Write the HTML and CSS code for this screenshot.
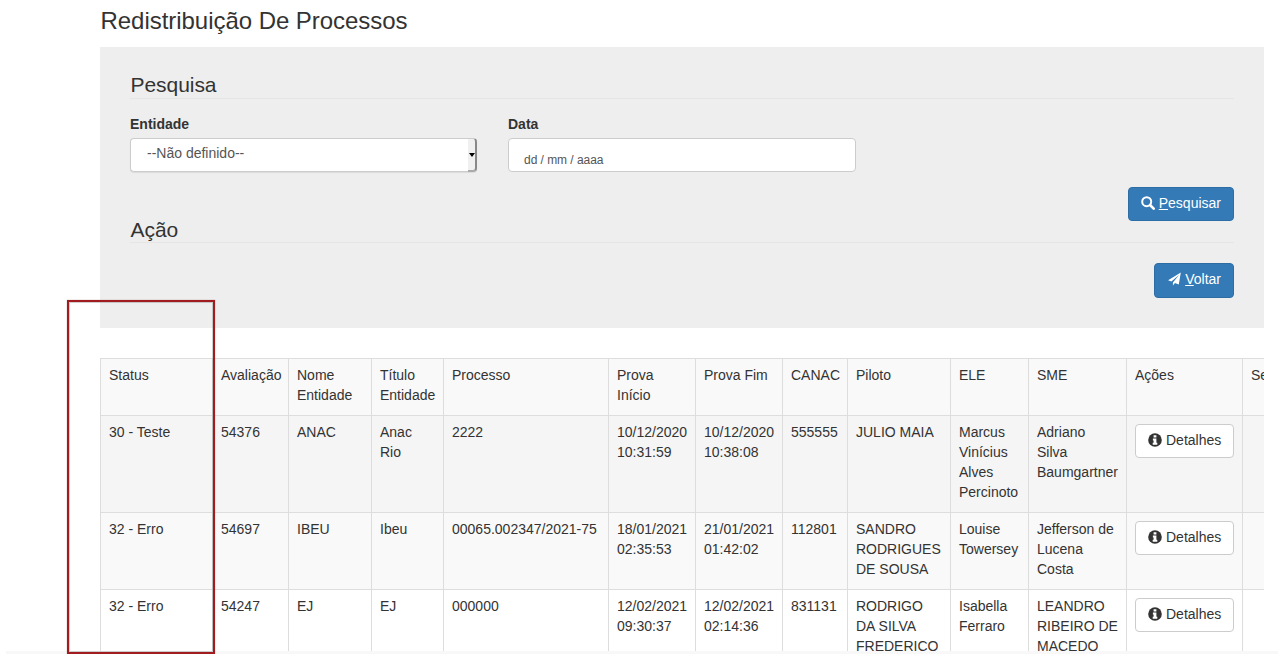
FILE: index.html
```html
<!DOCTYPE html>
<html lang="pt-BR">
<head>
<meta charset="utf-8">
<title>Redistribuição De Processos</title>
<link rel="stylesheet" href="styles.css">
</head>
<body>
<main class="page">
  <h1 class="title">Redistribuição De Processos</h1>
  <section class="panel">
    <h2 class="legend">Pesquisa</h2>
    <div class="fields">
      <div class="field field-entity">
        <label class="label">Entidade</label>
        <div class="select"><span class="select-text">--Não definido--</span><span class="select-arrow"><i></i></span></div>
      </div>
      <div class="field field-date">
        <label class="label">Data</label>
        <div class="date"><span>dd / mm / aaaa</span></div>
      </div>
    </div>
    <div class="actions actions-search">
      <a class="btn btn-primary">
        <svg class="icon" viewBox="0 0 14 14" width="14" height="14"><circle cx="5.7" cy="5.7" r="4.5" fill="none" stroke="#fff" stroke-width="2"/><path d="M9 9 12.7 12.7" stroke="#fff" stroke-width="2.6" stroke-linecap="round"/></svg>
        <span><u>P</u>esquisar</span>
      </a>
    </div>
    <h2 class="legend legend-action">Ação</h2>
    <div class="actions actions-back">
      <a class="btn btn-primary btn-tall">
        <svg class="icon icon-plane" viewBox="0 0 14 14" width="13" height="14"><path fill="#fff" d="M13.8.1 11.6 13 7.5 11.2 5.3 13.9V10.8L11.9 2.7 3.6 9.8.1 8.3Z"/></svg>
        <span><u>V</u>oltar</span>
      </a>
    </div>
  </section>
  <div class="table-wrap">
    <table class="grid">
      <thead>
        <tr><th>Status</th><th>Avaliação</th><th>Nome Entidade</th><th>Título Entidade</th><th>Processo</th><th>Prova Início</th><th>Prova Fim</th><th>CANAC</th><th>Piloto</th><th>ELE</th><th>SME</th><th>Ações</th><th>Ser</th></tr>
      </thead>
      <tbody>
        <tr class="hovered"><td>30 - Teste</td><td>54376</td><td>ANAC</td><td>Anac Rio</td><td>2222</td><td>10/12/2020 10:31:59</td><td>10/12/2020 10:38:08</td><td>555555</td><td>JULIO MAIA</td><td>Marcus Vinícius Alves Percinoto</td><td>Adriano Silva Baumgartner</td><td><a class="btn btn-default"><svg class="icon" viewBox="0 0 14 14" width="14" height="14"><circle cx="7" cy="7" r="6.8" fill="#333"/><path fill="#fff" d="M5.6 2.3h2.8v2.1H5.6zM4.9 5.5h3.5v4.3h.9v1.9H4.7V9.8h.9V7.4h-.7z"/></svg> <span>Detalhes</span></a></td><td></td></tr>
        <tr class="shaded"><td>32 - Erro</td><td>54697</td><td>IBEU</td><td>Ibeu</td><td>00065.002347/2021-75</td><td>18/01/2021 02:35:53</td><td>21/01/2021 01:42:02</td><td>112801</td><td>SANDRO RODRIGUES DE SOUSA</td><td>Louise Towersey</td><td>Jefferson de Lucena Costa</td><td><a class="btn btn-default"><svg class="icon" viewBox="0 0 14 14" width="14" height="14"><circle cx="7" cy="7" r="6.8" fill="#333"/><path fill="#fff" d="M5.6 2.3h2.8v2.1H5.6zM4.9 5.5h3.5v4.3h.9v1.9H4.7V9.8h.9V7.4h-.7z"/></svg> <span>Detalhes</span></a></td><td></td></tr>
        <tr><td>32 - Erro</td><td>54247</td><td>EJ</td><td>EJ</td><td>000000</td><td>12/02/2021 09:30:37</td><td>12/02/2021 02:14:36</td><td>831131</td><td>RODRIGO DA SILVA FREDERICO</td><td>Isabella Ferraro</td><td>LEANDRO RIBEIRO DE MACEDO</td><td><a class="btn btn-default"><svg class="icon" viewBox="0 0 14 14" width="14" height="14"><circle cx="7" cy="7" r="6.8" fill="#333"/><path fill="#fff" d="M5.6 2.3h2.8v2.1H5.6zM4.9 5.5h3.5v4.3h.9v1.9H4.7V9.8h.9V7.4h-.7z"/></svg> <span>Detalhes</span></a></td><td></td></tr>
      </tbody>
    </table>
  </div>
</main>
<div class="bottom-strip"></div>
<div class="highlight"></div>
</body>
</html>
```
FILE: styles.css
```css
* { box-sizing: border-box; }
html, body { height: 654px; overflow: hidden; }
body { margin: 0; background: #fff; color: #333; font: 14px/20px "Liberation Sans", Arial, sans-serif; }
.page { padding-left: 100px; width: 1264px; }
.title { margin: 0; padding: 8px 0 0 .5px; height: 47px; font-size: 24px; line-height: 26px; font-weight: 400; color: #333; letter-spacing: -.04px; }
.panel { height: 281px; background: #eee; padding: 24px 30px 0; display: flex; flex-direction: column; }
.legend { margin: 0; height: 28px; padding-left: .5px; border-bottom: 1px solid #e5e5e5; font-size: 21px; line-height: 28px; font-weight: 400; color: #333; flex: none; letter-spacing: -.05px; }
.fields { display: flex; gap: 31px; margin-top: 15px; }
.field { display: flex; flex-direction: column; }
.field-entity { width: 347px; }
.field-date { width: 348px; }
.label { font-weight: 700; margin-bottom: 4px; height: 20px; }
.select { height: 34px; background: #fff; border: 1px solid #ccc; border-right: 0; border-radius: 4px; display: flex; justify-content: space-between; color: #555; box-shadow: 0 1px 1px rgba(0,0,0,.08); }
.select-text { padding: 4px 0 0 16px; }
.select-arrow { width: 9px; background: #f0f0f0; border-top: 1px solid #ccc; border-right: 2px solid #888; border-bottom: 2px solid #aaa; border-radius: 0 4px 4px 0; display: flex; align-items: center; justify-content: center; margin: -1px 0; }
.select-arrow i { border: 3px solid transparent; border-top: 4px solid #000; border-bottom: 0; }
.date { height: 34px; background: #fff; border: 1px solid #ccc; border-radius: 4px; padding: 11px 0 0 15px; font-size: 12px; color: #555; letter-spacing: -.04px; }
.actions { display: flex; justify-content: flex-end; flex: none; }
.actions-search { margin-top: 15px; }
.legend-action { margin-top: -5px; height: 27px; }
.actions-back { margin-top: 20px; }
.btn { display: inline-flex; align-items: center; height: 34px; padding: 0 12px 2px; border: 1px solid transparent; border-radius: 4px; white-space: nowrap; gap: 4px; }
.btn-tall { height: 35px; padding-bottom: 3px; }
.icon-plane { margin-left: 1px; }
.btn-primary { background: #337ab7; border-color: #2e6da4; color: #fff; }
.btn-default { background: #fff; border-color: #ccc; color: #333; margin-top: 2px; }
.table-wrap { margin-top: 30px; overflow: hidden; }
.grid { border-collapse: collapse; table-layout: fixed; width: 1240px; border: 1px solid #ddd; }
.grid th, .grid td { padding: 6px 8px 10px; border: 1px solid #ddd; text-align: left; vertical-align: top; font-weight: 400; }
.grid th { background: #f9f9f9; }
.grid .shaded td { background: #f9f9f9; }
.grid .hovered td { background: #f5f5f5; }
.grid th:nth-child(1) { width: 112px; }
.grid th:nth-child(2) { width: 76px; }
.grid th:nth-child(3) { width: 83px; }
.grid th:nth-child(4) { width: 72px; }
.grid th:nth-child(5) { width: 165px; }
.grid th:nth-child(6) { width: 87px; }
.grid th:nth-child(7) { width: 87px; }
.grid th:nth-child(8) { width: 65px; }
.grid th:nth-child(9) { width: 103px; }
.grid th:nth-child(10) { width: 78px; }
.grid th:nth-child(11) { width: 98px; }
.grid th:nth-child(12) { width: 116px; }
.grid th:nth-child(13) { width: 98px; }
.bottom-strip { position: absolute; left: 6px; right: 0; top: 651px; height: 3px; background: #f8f8f8; }
.highlight { position: absolute; left: 67px; top: 300px; width: 148px; height: 354px; border: 2px solid #a01c1f; box-shadow: inset 0 0 0 1px rgba(120,120,120,.35), 0 0 1px rgba(120,40,40,.5); }
```
